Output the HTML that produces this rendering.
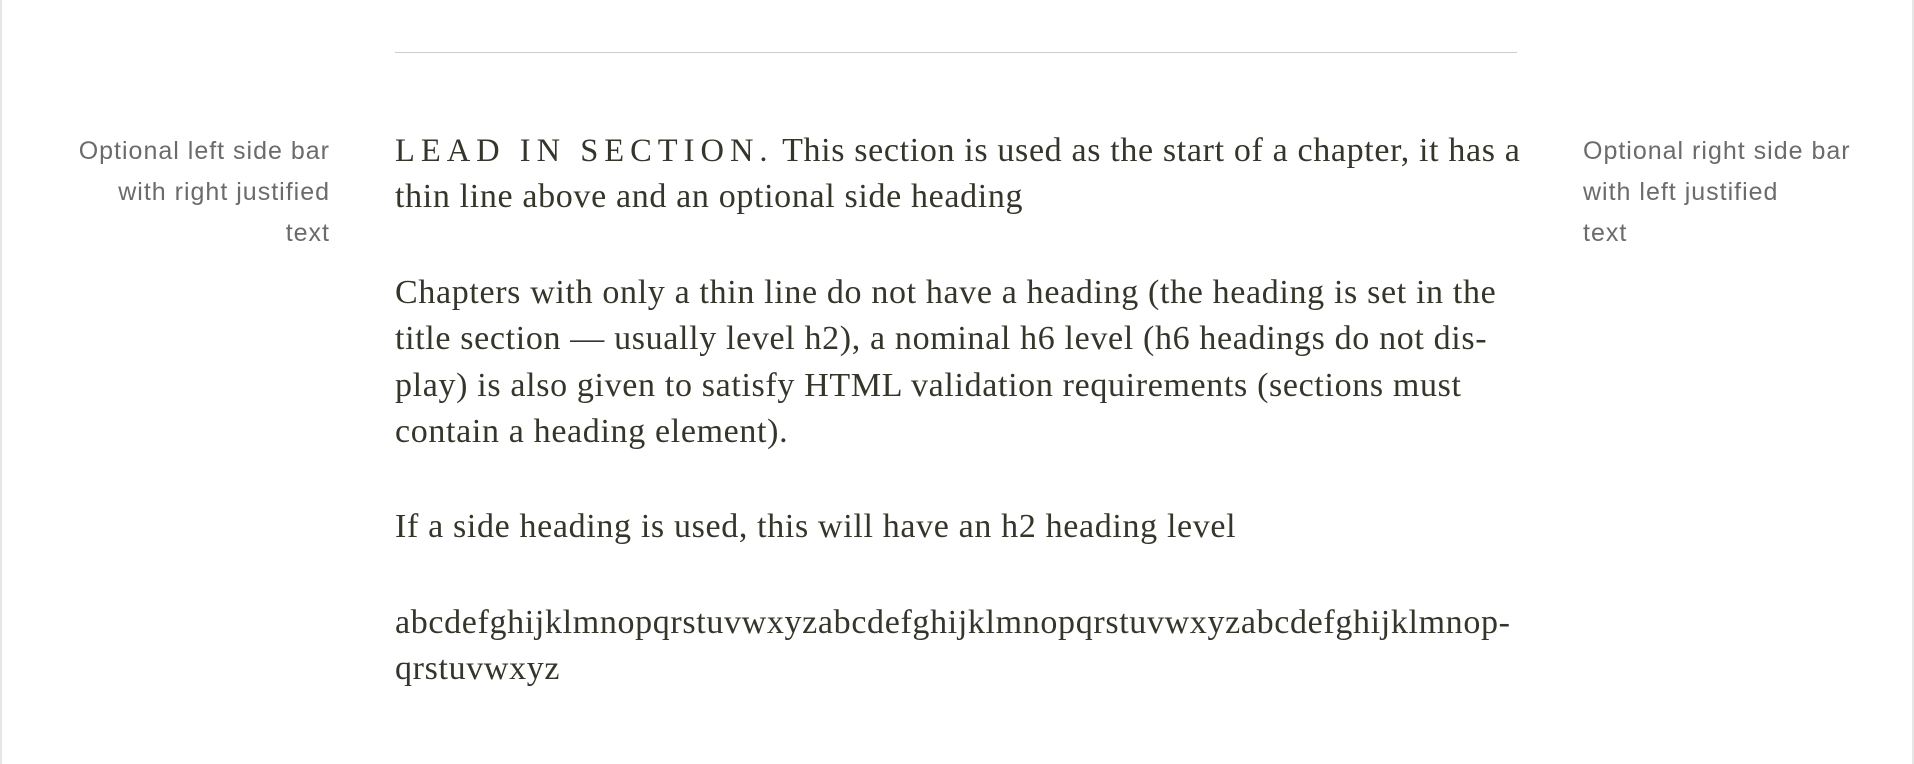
<!DOCTYPE html>
<html><head><meta charset="utf-8"><style>
html,body{margin:0;padding:0;background:#fff;width:1914px;height:764px;overflow:hidden;position:relative}
.bl{position:absolute;left:0;top:0;width:2px;height:764px;background:#e6e6e6}
.br{position:absolute;right:0;top:0;width:2px;height:764px;background:#e6e6e6}
.rule{position:absolute;left:395px;top:52px;width:1122px;height:1px;background:#ccc}
.side{position:absolute;font-family:"Liberation Sans",sans-serif;font-size:25px;line-height:41px;color:#6b6b6b;white-space:nowrap;letter-spacing:1px}
.main{position:absolute;left:395px;top:128px;font-family:"Liberation Serif",serif;font-size:34px;line-height:46.4px;color:#35352b;white-space:nowrap;letter-spacing:0.65px}
.main p{margin:0 0 49px 0}
.sc{letter-spacing:6px;font-size:32.5px}
</style></head><body>
<div class="bl"></div><div class="br"></div>
<div class="rule"></div>
<div class="side" style="right:1584px;top:131px;text-align:right">Optional left side bar<br>with right justified<br>text</div>
<div class="side" style="left:1583px;top:131px">Optional right side bar<br>with left justified<br>text</div>
<div class="main">
<p><span class="sc">LEAD IN SECTION.</span> This section is used as the start of a chapter, it has a<br>thin line above and an optional side heading</p>
<p>Chapters with only a thin line do not have a heading (the heading is set in the<br>title section — usually level h2), a nominal h6 level (h6 headings do not dis-<br>play) is also given to satisfy HTML validation requirements (sections must<br>contain a heading element).</p>
<p>If a side heading is used, this will have an h2 heading level</p>
<p>abcdefghijklmnopqrstuvwxyzabcdefghijklmnopqrstuvwxyzabcdefghijklmnop-<br>qrstuvwxyz</p>
</div>
</body></html>
